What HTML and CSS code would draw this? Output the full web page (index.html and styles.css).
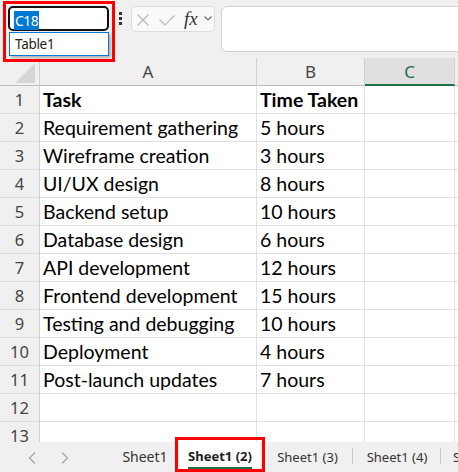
FILE: index.html
```html
<!DOCTYPE html>
<html lang="en">
<head>
<meta charset="utf-8">
<title>Sheet</title>
<link rel="stylesheet" href="styles.css">
</head>
<body>
<div class="app">
  <div class="toolbar">
    <div class="namebox"><span class="sel">C18</span></div>
    <div class="dots"><i></i><i></i><i></i></div>
    <div class="fxgroup">
      <svg class="ico-x" width="12" height="12" viewBox="0 0 12 12"><path d="M0.5 0.5L11.5 11.5M11.5 0.5L0.5 11.5" stroke="#b9b9b9" stroke-width="1.2" fill="none"/></svg>
      <svg class="ico-check" width="16" height="11" viewBox="0 0 16 11"><path d="M0.5 4.5L6 10L15.5 0.5" stroke="#b9b9b9" stroke-width="1.2" fill="none"/></svg>
      <span class="fx">fx</span>
      <svg class="ico-chev" width="8" height="5" viewBox="0 0 8 5"><path d="M0.5 0.5L4 4L7.5 0.5" stroke="#6a6a6a" stroke-width="1.1" fill="none"/></svg>
    </div>
    <div class="formula"></div>
    <div class="dropdown">Table1</div>
    <div class="mark mark-name"></div>
  </div>

  <div class="sheet">
    <div class="grid">
      <div class="corner"><svg width="40" height="28" viewBox="0 0 40 28"><path d="M35 5L35 25L15 25Z" fill="#d6d6d6"/></svg></div>
      <div class="ch">A</div>
      <div class="ch">B</div>
      <div class="ch ch-sel">C</div>
      <div class="ch"></div>

      <div class="rh">1</div><div class="c b">Task</div><div class="c b">Time Taken</div><div class="c"></div><div class="c"></div>
      <div class="rh">2</div><div class="c">Requirement gathering</div><div class="c">5 hours</div><div class="c"></div><div class="c"></div>
      <div class="rh">3</div><div class="c">Wireframe creation</div><div class="c">3 hours</div><div class="c"></div><div class="c"></div>
      <div class="rh">4</div><div class="c">UI/UX design</div><div class="c">8 hours</div><div class="c"></div><div class="c"></div>
      <div class="rh">5</div><div class="c">Backend setup</div><div class="c">10 hours</div><div class="c"></div><div class="c"></div>
      <div class="rh">6</div><div class="c">Database design</div><div class="c">6 hours</div><div class="c"></div><div class="c"></div>
      <div class="rh">7</div><div class="c">API development</div><div class="c">12 hours</div><div class="c"></div><div class="c"></div>
      <div class="rh">8</div><div class="c">Frontend development</div><div class="c">15 hours</div><div class="c"></div><div class="c"></div>
      <div class="rh">9</div><div class="c">Testing and debugging</div><div class="c">10 hours</div><div class="c"></div><div class="c"></div>
      <div class="rh">10</div><div class="c">Deployment</div><div class="c">4 hours</div><div class="c"></div><div class="c"></div>
      <div class="rh">11</div><div class="c">Post-launch updates</div><div class="c">7 hours</div><div class="c"></div><div class="c"></div>
      <div class="rh">12</div><div class="c"></div><div class="c"></div><div class="c"></div><div class="c"></div>
      <div class="rh">13</div><div class="c"></div><div class="c"></div><div class="c"></div><div class="c"></div>
    </div>
  </div>

  <div class="tabbar">
    <div class="navs">
      <svg width="8" height="12" viewBox="0 0 8 12"><path d="M7 0.5L1.5 6L7 11.5" stroke="#a0a0a0" stroke-width="1.1" fill="none"/></svg>
      <svg width="8" height="12" viewBox="0 0 8 12"><path d="M1 0.5L6.5 6L1 11.5" stroke="#a0a0a0" stroke-width="1.1" fill="none"/></svg>
    </div>
    <div class="tab t1">Sheet1</div>
    <div class="tab active"><span>Sheet1 (2)</span></div>
    <div class="tab t3">Sheet1 (3)</div>
    <div class="tab t4">Sheet1 (4)</div>
    <div class="tab t5">Sheet1 (5)</div>
    <div class="mark mark-tab"></div>
  </div>
</div>
</body>
</html>
```

FILE: styles.css
```css
* { box-sizing: border-box; }

body {
  margin: 0;
  width: 458px;
  height: 472px;
  overflow: hidden;
  background: #f0f0f0;
  font-family: "Noto Sans", "Open Sans", sans-serif;
  color: #333;
}

.app {
  display: flex;
  flex-direction: column;
  width: 458px;
  height: 472px;
}

/* ---------- toolbar ---------- */
.toolbar {
  position: relative;
  height: 58px;
  flex: none;
  display: flex;
  align-items: flex-start;
  padding: 6px 0 0 8px;
  background: #f0f0f0;
  z-index: 3;
}

.namebox {
  width: 101px;
  height: 25px;
  border: 2px solid #111;
  border-radius: 5px;
  background: #fff;
  padding: 1px 0 0 4px;
}

.sel {
  display: inline-block;
  height: 19px;
  line-height: 19px;
  padding: 0 1px;
  background: #0078d4;
  color: #fff;
  font-size: 14px;
  letter-spacing: -0.6px;
}

.dots {
  width: 3px;
  height: 25px;
  margin-left: 10px;
  display: flex;
  flex-direction: column;
  justify-content: center;
  gap: 2px;
}
.dots i {
  display: block;
  width: 3px;
  height: 3px;
  background: #333;
}

.fxgroup {
  width: 84px;
  height: 26px;
  margin-left: 9px;
  border: 1px solid #dcdcdc;
  border-radius: 5px;
  background: #f9f9f9;
  display: flex;
  align-items: center;
  padding: 2px 0 0 5px;
}
.ico-x { flex: none; }
.ico-check { margin-left: 10px; flex: none; }
.fx {
  margin-left: 9px;
  font-family: "Liberation Serif", "DejaVu Serif", serif;
  font-style: italic;
  font-size: 19px;
  line-height: 20px;
  color: #333;
  margin-top: -3px;
}
.ico-chev { margin-left: 6px; flex: none; margin-top: -3px; }

.formula {
  flex: 1;
  height: 46px;
  margin-left: 6px;
  margin-right: -10px;
  border: 1px solid #d2d2d2;
  border-radius: 6px;
  background: #fff;
}

.dropdown {
  position: absolute;
  left: 9px;
  top: 32px;
  width: 100px;
  height: 24px;
  border: 1px solid #0078d4;
  background: #fff;
  box-shadow: 2px 2px 3px rgba(0,0,0,0.28);
  font-size: 13.5px;
  letter-spacing: -0.3px;
  line-height: 22px;
  padding-left: 5px;
  color: #222;
}

.mark {
  position: absolute;
  border: 3px solid #ff0000;
  pointer-events: none;
}
.mark-name {
  left: 3px;
  top: 1px;
  width: 112px;
  height: 61px;
}

/* ---------- sheet ---------- */
.sheet {
  height: 384px;
  flex: none;
  overflow: hidden;
  background: #fff;
}

.grid {
  display: grid;
  grid-template-columns: 40px 217px 108px 90px 1fr;
  grid-auto-rows: 28px;
}

.corner {
  background: #f0f0f0;
  border-right: 1px solid #d0d0d0;
  border-bottom: 1px solid #bdbdbd;
}
.corner svg { display: block; }

.ch {
  background: #f0f0f0;
  border-right: 1px solid #d0d0d0;
  border-bottom: 1px solid #bdbdbd;
  text-align: center;
  font-size: 17px;
  line-height: 27px;
  color: #444;
}
.ch-sel {
  background: #e0e0e0;
  color: #1e7145;
  border-bottom: 2px solid #1e7145;
}

.rh {
  background: #f0f0f0;
  border-right: 1px solid #d0d0d0;
  border-bottom: 1px solid #dcdcdc;
  text-align: center;
  font-size: 16.5px;
  line-height: 28px;
  color: #444;
}

.c {
  background: #fff;
  border-right: 1px solid #e1e1e1;
  border-bottom: 1px solid #e1e1e1;
  padding-left: 3px;
  font-family: "Lato", "Liberation Sans", sans-serif;
  font-size: 19.5px;
  line-height: 28px;
  color: #000;
  white-space: nowrap;
}
.c.b { font-weight: 700; }

/* ---------- tabs ---------- */
.tabbar {
  position: relative;
  height: 30px;
  flex: none;
  display: flex;
  align-items: stretch;
  background: #f0f0f0;
  font-size: 13px;
  color: #333;
  white-space: nowrap;
  z-index: 3;
}

.navs {
  width: 110px;
  flex: none;
  display: flex;
  align-items: center;
  padding-left: 28px;
  gap: 25px;
}
.navs svg { display: block; margin-top: 1px; }

.tab {
  display: flex;
  align-items: center;
  justify-content: center;
  flex: none;
  line-height: 20px;
}
.t1 { width: 70px; font-size: 14px; }
.active {
  width: 80px;
  background: #fff;
  font-weight: 700;
  color: #222;
}
.active span {
  border-bottom: 3px solid #1e7145;
  padding-bottom: 1px;
  margin-top: 1px;
}
.t3 { width: 93px; position: relative; padding-left: 2px; }
.t4 { width: 88px; position: relative; }
.t5 { justify-content: flex-start; padding-left: 12px; }
.t3::after, .t4::after {
  content: "";
  position: absolute;
  right: 0;
  top: 6px;
  height: 16px;
  border-right: 1px solid #c8c8c8;
}

.mark-tab {
  left: 175px;
  top: -5px;
  width: 90px;
  height: 35px;
}
```
